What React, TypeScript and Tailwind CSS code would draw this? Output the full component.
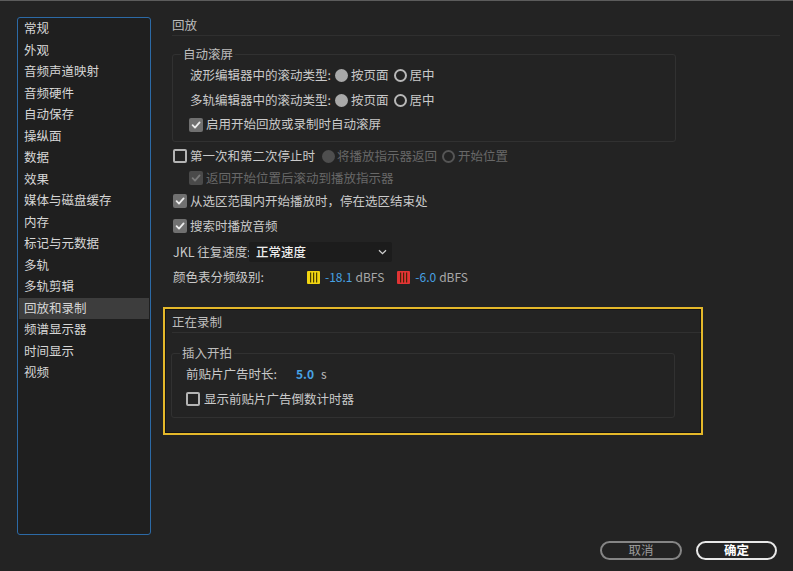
import type { ReactNode } from "react";

const navItems = [
  "常规",
  "外观",
  "音频声道映射",
  "音频硬件",
  "自动保存",
  "操纵面",
  "数据",
  "效果",
  "媒体与磁盘缓存",
  "内存",
  "标记与元数据",
  "多轨",
  "多轨剪辑",
  "回放和录制",
  "频谱显示器",
  "时间显示",
  "视频",
];

function Check({ checked, disabled }: { checked?: boolean; disabled?: boolean }) {
  if (!checked) {
    return (
      <span className="w-[14px] h-[14px] rounded-[2px] border-2 border-[#b4b4b4] shrink-0" />
    );
  }
  return (
    <span
      className={
        "w-[14px] h-[14px] rounded-[2px] shrink-0 flex items-center justify-center " +
        (disabled ? "bg-[#4a4a4a]" : "bg-[#707070]")
      }
    >
      <svg width="10" height="10" viewBox="0 0 10 10" fill="none">
        <path
          d="M1.6 5.2 L4 7.6 L8.6 2.4"
          stroke={disabled ? "#7a7a7a" : "#ececec"}
          strokeWidth="1.8"
          strokeLinecap="round"
          strokeLinejoin="round"
        />
      </svg>
    </span>
  );
}

function Radio({ on, disabled }: { on?: boolean; disabled?: boolean }) {
  if (on) {
    return (
      <span
        className={
          "w-[13px] h-[13px] rounded-full shrink-0 " +
          (disabled ? "bg-[#4e4e4e]" : "bg-[#a9a9a9]")
        }
      />
    );
  }
  return (
    <span
      className={
        "w-[13px] h-[13px] rounded-full border-2 shrink-0 " +
        (disabled ? "border-[#555]" : "border-[#b8b8b8]")
      }
    />
  );
}

function Group({ title, children }: { title: string; children: ReactNode }) {
  return (
    <fieldset className="border border-[#313131] rounded-[3px] w-[504px] px-0 pb-[5px]">
      <legend className="ml-[8px] px-[2px] h-[18px] leading-[18px] text-[#bdbdbd]">{title}</legend>
      {children}
    </fieldset>
  );
}

function Meter({ color }: { color: string }) {
  return (
    <svg width="13" height="13" viewBox="0 0 13 13" className="shrink-0">
      <rect x="0" y="0" width="13" height="13" rx="1" fill={color} />
      <rect x="3" y="1.5" width="1.2" height="10" fill="#2a2200" opacity="0.85" />
      <rect x="6" y="1.5" width="1.2" height="10" fill="#2a2200" opacity="0.85" />
      <rect x="9" y="1.5" width="1.2" height="10" fill="#2a2200" opacity="0.85" />
    </svg>
  );
}

export default function App() {
  return (
    <div
      className="w-[793px] h-[571px] bg-[#232323] border-t border-[#5c5c5c] flex flex-col text-[12.5px] text-[#cacaca] overflow-hidden whitespace-nowrap"
      style={{ fontFamily: '"Noto Sans CJK SC", "Noto Sans", sans-serif' }}
    >
      <div className="flex items-start">
        {/* sidebar */}
        <div className="ml-[17px] mt-[16px] w-[134px] h-[518px] border border-[#2c6aa6] rounded-[3px] bg-[#1f1f1f] text-[#d6d6d6]">
          {navItems.map((item) => (
            <div
              key={item}
              className={
                "h-[21.5px] flex items-center pl-[5px] mx-[1px] " +
                (item === "回放和录制" ? "bg-[#3d3d3d]" : "")
              }
            >
              {item}
            </div>
          ))}
        </div>

        {/* main */}
        <div className="ml-[12px] mt-[14px] flex flex-col">
          <div className="ml-[9px] w-[608px] h-[21px] border-b border-[#2f2f2f] flex items-center text-[#bdbdbd]">
            回放
          </div>

          <div className="ml-[9px] mt-[9px]">
            <Group title="自动滚屏">
              <div className="h-[25px] flex items-center pl-[17px]">
                <span className="w-[145px] shrink-0">波形编辑器中的滚动类型:</span>
                <Radio on />
                <span className="ml-[3px]">按页面</span>
                <span className="ml-[5px] flex items-center">
                  <Radio />
                  <span className="ml-[3px]">居中</span>
                </span>
              </div>
              <div className="h-[25px] flex items-center pl-[17px]">
                <span className="w-[145px] shrink-0">多轨编辑器中的滚动类型:</span>
                <Radio on />
                <span className="ml-[3px]">按页面</span>
                <span className="ml-[5px] flex items-center">
                  <Radio />
                  <span className="ml-[3px]">居中</span>
                </span>
              </div>
              <div className="h-[23px] flex items-center pl-[16px] gap-[3px]">
                <Check checked />
                <span>启用开始回放或录制时自动滚屏</span>
              </div>
            </Group>
          </div>

          <div className="mt-[3px] h-[22px] flex items-center pl-[10px]">
            <Check />
            <span className="ml-[3px]">第一次和第二次停止时</span>
            <span className="ml-[7px] flex items-center">
              <Radio on disabled />
              <span className="ml-[2px] text-[#686868]">将播放指示器返回</span>
            </span>
            <span className="ml-[5px] flex items-center">
              <Radio disabled />
              <span className="ml-[3px] text-[#686868]">开始位置</span>
            </span>
          </div>
          <div className="h-[22px] flex items-center pl-[26px] gap-[3px]">
            <Check checked disabled />
            <span className="text-[#686868]">返回开始位置后滚动到播放指示器</span>
          </div>
          <div className="h-[24px] flex items-center pl-[10px] gap-[3px]">
            <Check checked />
            <span>从选区范围内开始播放时，停在选区结束处</span>
          </div>
          <div className="h-[26px] flex items-center pl-[10px] gap-[3px]">
            <Check checked />
            <span>搜索时播放音频</span>
          </div>
          <div className="h-[26px] flex items-center pl-[10px]">
            <span className="w-[76px] shrink-0">JKL 往复速度:</span>
            <div className="w-[143px] h-[20px] bg-[#1c1c1c] rounded-[2px] flex items-center justify-between pl-[7px] pr-[5px] text-[#ececec] font-medium">
              <span>正常速度</span>
              <svg width="9" height="6" viewBox="0 0 9 6" fill="none">
                <path d="M1 1.2 L4.5 4.6 L8 1.2" stroke="#cfcfcf" strokeWidth="1.3" />
              </svg>
            </div>
          </div>
          <div className="h-[24px] flex items-center pl-[10px] text-[12px]">
            <span className="w-[134px] shrink-0 text-[12.5px]">颜色表分频级别:</span>
            <Meter color="#f1d410" />
            <span className="ml-[5px] text-[#47a2e3]">-18.1</span>
            <span className="ml-[3px] text-[#a8a8a8]">dBFS</span>
            <span className="ml-[13px] flex items-center">
              <Meter color="#e23434" />
            </span>
            <span className="ml-[5px] text-[#47a2e3]">-6.0</span>
            <span className="ml-[3px] text-[#a8a8a8]">dBFS</span>
          </div>

          {/* highlighted section */}
          <div className="mt-[18px] w-[540px] h-[128px] border-2 border-[#e4b82a] shadow-[inset_0_0_0_1px_#141414] pl-[7px]">
            <div className="mt-[4px] h-[20px] border-b border-[#303030] flex items-center text-[#bdbdbd]">
              正在录制
            </div>
            <div className="mt-[11px] -ml-[1px]">
              <Group title="插入开拍">
                <div className="h-[24px] flex items-center pl-[14px]">
                  <span className="w-[110px] shrink-0">前贴片广告时长:</span>
                  <span className="text-[#47a2e3] font-semibold text-[12px]">5.0</span>
                  <span className="ml-[7px] text-[#bdbdbd] text-[12px]">s</span>
                </div>
                <div className="h-[26px] flex items-center pl-[14px] gap-[4px]">
                  <Check />
                  <span>显示前贴片广告倒数计时器</span>
                </div>
              </Group>
            </div>
          </div>
        </div>
      </div>

      <div className="mt-[6px] flex justify-end pr-[16px] gap-[14px]">
        <button className="w-[82px] h-[19px] rounded-full border-2 border-[#858585] text-[#9a9a9a] flex items-center justify-center leading-none">
          取消
        </button>
        <button className="w-[81px] h-[19px] rounded-full border-2 border-[#e8e8e8] text-white font-bold flex items-center justify-center leading-none">
          确定
        </button>
      </div>
    </div>
  );
}
